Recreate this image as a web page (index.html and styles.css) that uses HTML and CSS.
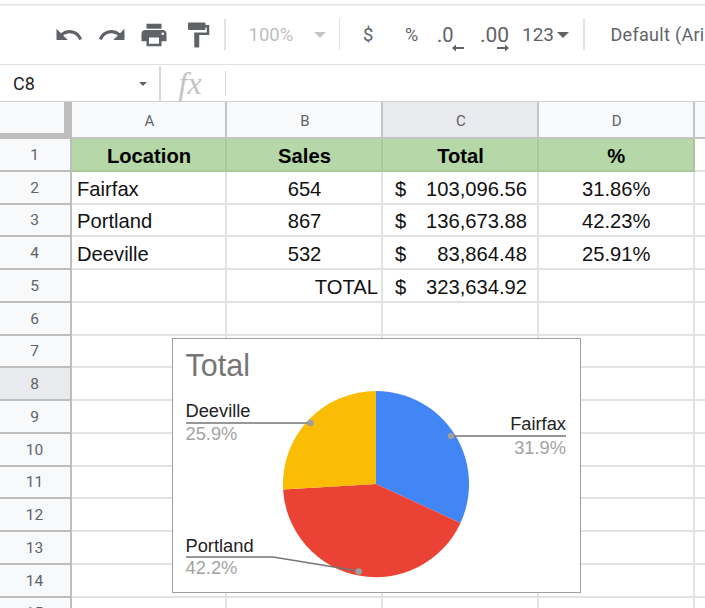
FILE: index.html
```html
<!DOCTYPE html>
<html lang="en">
<head>
<meta charset="utf-8">
<title>Sheet</title>
<link rel="stylesheet" href="styles.css">
</head>
<body>
<div class="app">
  <div class="toolbar">
    <svg class="ic ic-undo" viewBox="0 0 24 24"><path d="M12.5 8c-2.65 0-5.05.99-6.9 2.6L2 7v9h9l-3.62-3.62c1.39-1.16 3.16-1.88 5.12-1.88 3.54 0 6.55 2.31 7.6 5.5l2.37-.78C21.08 11.03 17.15 8 12.5 8z"/></svg>
    <svg class="ic ic-redo" viewBox="0 0 24 24"><path d="M18.4 10.6C16.55 8.99 14.15 8 11.5 8c-4.65 0-8.58 3.03-9.96 7.22L3.9 16c1.05-3.19 4.05-5.5 7.6-5.5 1.95 0 3.73.72 5.12 1.88L13 16h9V7l-3.6 3.6z"/></svg>
    <svg class="ic ic-print" viewBox="0 0 24 24"><path d="M19 8H5c-1.66 0-3 1.34-3 3v6h4v4h12v-4h4v-6c0-1.66-1.34-3-3-3zm-3 11H8v-5h8v5zm3-7c-.55 0-1-.45-1-1s.45-1 1-1 1 .45 1 1-.45 1-1 1zm-1-9H6v4h12V3z"/></svg>
    <svg class="ic ic-paint" viewBox="0 0 24 24"><path d="M18 4V3c0-.55-.45-1-1-1H5c-.55 0-1 .45-1 1v4c0 .55.45 1 1 1h12c.55 0 1-.45 1-1V6h1v4H9v11c0 .55.45 1 1 1h2c.55 0 1-.45 1-1v-9h8V4h-3z"/></svg>
    <span class="sep sep-a"></span>
    <span class="zoom-val">100%</span>
    <span class="caret caret-off"></span>
    <span class="sep sep-b"></span>
    <span class="tb tb-dollar">$</span>
    <span class="tb tb-pct">%</span>
    <span class="tb tb-dec1">.0<svg class="arrow" viewBox="0 0 12 8"><path d="M0 4l4-3.5V3h8v2H4v2.500z"/></svg></span>
    <span class="tb tb-dec2">.00<svg class="arrow" viewBox="0 0 12 8"><path d="M12 4L8 .5V3H0v2h8v2.500z"/></svg></span>
    <span class="tb tb-123">123</span>
    <span class="caret"></span>
    <span class="sep sep-c"></span>
    <span class="tb tb-font">Default (Ari</span>
  </div>
  <div class="formula">
    <span class="cellref">C8</span>
    <span class="caret caret-small"></span>
    <span class="vsep vsep-a"></span>
    <span class="fx">fx</span>
    <span class="vsep vsep-b"></span>
  </div>
  <div class="sheet">
    <div class="row head">
      <div class="corner"></div>
      <div class="ch">A</div><div class="ch">B</div><div class="ch ch-sel">C</div><div class="ch">D</div><div class="ch-rest"></div>
    </div>
    <div class="row">
      <div class="rh">1</div>
      <div class="c hd">Location</div><div class="c hd">Sales</div><div class="c hd">Total</div><div class="c hd">%</div><div class="c"></div>
    </div>
    <div class="row">
      <div class="rh">2</div>
      <div class="c left">Fairfax</div><div class="c">654</div><div class="c acct"><span>$</span><span>103,096.56</span></div><div class="c">31.86%</div><div class="c"></div>
    </div>
    <div class="row">
      <div class="rh">3</div>
      <div class="c left">Portland</div><div class="c">867</div><div class="c acct"><span>$</span><span>136,673.88</span></div><div class="c">42.23%</div><div class="c"></div>
    </div>
    <div class="row">
      <div class="rh">4</div>
      <div class="c left">Deeville</div><div class="c">532</div><div class="c acct"><span>$</span><span>83,864.48</span></div><div class="c">25.91%</div><div class="c"></div>
    </div>
    <div class="row">
      <div class="rh">5</div>
      <div class="c"></div><div class="c right">TOTAL</div><div class="c acct"><span>$</span><span>323,634.92</span></div><div class="c"></div><div class="c"></div>
    </div>
    <div class="row"><div class="rh">6</div><div class="c"></div><div class="c"></div><div class="c"></div><div class="c"></div><div class="c"></div></div>
    <div class="row"><div class="rh">7</div><div class="c"></div><div class="c"></div><div class="c"></div><div class="c"></div><div class="c"></div></div>
    <div class="row"><div class="rh rh-sel">8</div><div class="c"></div><div class="c"></div><div class="c"></div><div class="c"></div><div class="c"></div></div>
    <div class="row"><div class="rh">9</div><div class="c"></div><div class="c"></div><div class="c"></div><div class="c"></div><div class="c"></div></div>
    <div class="row"><div class="rh">10</div><div class="c"></div><div class="c"></div><div class="c"></div><div class="c"></div><div class="c"></div></div>
    <div class="row"><div class="rh">11</div><div class="c"></div><div class="c"></div><div class="c"></div><div class="c"></div><div class="c"></div></div>
    <div class="row"><div class="rh">12</div><div class="c"></div><div class="c"></div><div class="c"></div><div class="c"></div><div class="c"></div></div>
    <div class="row"><div class="rh">13</div><div class="c"></div><div class="c"></div><div class="c"></div><div class="c"></div><div class="c"></div></div>
    <div class="row"><div class="rh">14</div><div class="c"></div><div class="c"></div><div class="c"></div><div class="c"></div><div class="c"></div></div>
    <div class="row"><div class="rh">15</div><div class="c"></div><div class="c"></div><div class="c"></div><div class="c"></div><div class="c"></div></div>
  </div>
  <svg class="chart" viewBox="172 338 409 255" width="409" height="255">
    <rect class="frame" x="172.500" y="338.500" width="408" height="254"/>
    <text class="title" x="185.500" y="376">Total</text>
    <path class="blue" d="M376 484V391A93 93 0 0 1 460.500 522.900Z"/>
    <path class="red" d="M376 484L460.500 522.900A93 93 0 0 1 283.100 489.400Z"/>
    <path class="yellow" d="M376 484L283.100 489.400A93 93 0 0 1 376 391Z"/>
    <path class="lead" d="M186 423H310.500"/>
    <path class="lead" d="M566 436H451"/>
    <path class="lead" d="M186 557H273L358.700 571"/>
    <circle class="dot" cx="310.500" cy="423" r="3.300"/>
    <circle class="dot" cx="451" cy="436" r="3.300"/>
    <circle class="dot" cx="358.700" cy="571.500" r="3.300"/>
    <text class="lab" x="185.500" y="417">Deeville</text>
    <text class="val" x="185.500" y="440">25.9%</text>
    <text class="lab end" x="566" y="430">Fairfax</text>
    <text class="val end" x="566" y="454">31.9%</text>
    <text class="lab" x="185.500" y="552">Portland</text>
    <text class="val" x="185.500" y="574">42.2%</text>
  </svg>
</div>
</body>
</html>
```
FILE: styles.css
```css
html, body { margin: 0; padding: 0; background: #fff; }
.app { position: relative; width: 705px; height: 608px; overflow: hidden; font-family: "Liberation Sans", Arial, sans-serif; }

.toolbar { box-sizing: border-box; height: 65px; border-top: 2px solid #fff; background: linear-gradient(#e3e3e3, #e3e3e3) 0 2px / 100% 1.500px no-repeat; border-bottom: 1.500px solid #e0e0e0; display: flex; align-items: center; padding: 3px 0 0 54px; white-space: nowrap; font-family: Roboto, sans-serif; color: #5f6368; }
.ic { width: 30px; height: 30px; fill: #5f6368; flex: none; }
.ic-redo { margin-left: 13px; }
.ic-print { margin-left: 12px; }
.ic-paint { margin-left: 14px; }
.sep { width: 1.500px; height: 31px; background: #e3e3e3; flex: none; }
.sep-a { margin-left: 11px; }
.zoom-val { margin-left: 23px; width: 46px; font-size: 18.500px; color: #bdbdbd; }
.caret { width: 0; height: 0; border-left: 6.500px solid transparent; border-right: 6.500px solid transparent; border-top: 6.500px solid #5f6368; flex: none; }
.caret-off { margin-left: 19px; border-top-color: #c4c4c4; }
.sep-b { margin-left: 13px; }
.tb { font-size: 18px; line-height: 20px; flex: none; }
.tb-dollar { margin-left: 23px; width: 19px; font-size: 18.500px; }
.tb-pct { margin-left: 23px; width: 19px; }
.tb-dec1 { margin-left: 13px; width: 36px; position: relative; font-size: 20px; }
.tb-dec2 { margin-left: 7px; width: 42px; position: relative; font-size: 21px; }
.arrow { position: absolute; width: 12px; height: 8px; fill: #5f6368; top: 19px; right: 9px; }
.tb-dec2 .arrow { right: 13px; }
.tb-123 { width: 35px; font-size: 19px; }
.sep-c { margin-left: 14px; }
.tb-font { margin-left: 26px; font-size: 18px; letter-spacing: 0.300px; }

.formula { box-sizing: border-box; height: 37px; border-bottom: 1.500px solid #cfcfcf; display: flex; align-items: center; position: relative; }
.cellref { margin-left: 13px; width: 126px; font-size: 18px; color: #1f1f1f; font-family: Roboto, sans-serif; }
.caret-small { border-left-width: 4px; border-right-width: 4px; border-top-width: 4.500px; margin-top: 2px; }
.vsep { width: 1.500px; background: #d8d8d8; flex: none; }
.vsep-a { margin-left: 12px; height: 35px; }
.vsep-b { margin-left: 20px; height: 25px; }
.fx { margin-left: 18px; width: 26px; font-family: "Liberation Serif", serif; font-style: italic; font-size: 32px; line-height: 30px; color: #c2c2c2; }

.sheet { display: block; }
.row { display: grid; grid-template-columns: 72px 155px 156px 156px 155.500px 12px; height: 32.750px; }
.head { height: 37px; }
.row > * { box-sizing: border-box; }
.corner { background: #f8f9fa; border-right: 8px solid #bdbdbd; border-bottom: 6px solid #bdbdbd; }
.ch { background: #f8f9fa; border-right: 2px solid #c4c4c4; border-bottom: 2.500px solid #c4c4c4; display: flex; align-items: center; justify-content: center; font-family: Roboto, sans-serif; font-size: 15px; color: #5f6368; padding: 2px 0 0 2px; }
.ch-sel { background: #e8eaed; }
.ch-rest { background: #f8f9fa; border-bottom: 2.500px solid #c4c4c4; }
.rh { background: #f8f9fa; border-right: 2px solid #bdbdbd; border-bottom: 2px solid #bdbdbd; display: flex; align-items: center; justify-content: center; font-family: Roboto, sans-serif; font-size: 15.500px; color: #5f6368; padding: 1px 1px 0 0; }
.rh-sel { background: #e8eaed; }
.c { border-right: 2px solid #e2e2e2; border-bottom: 2px solid #e2e2e2; display: flex; align-items: center; justify-content: center; font-size: 20.200px; color: #111; white-space: nowrap; padding: 4px 0 0 1px; }
.left { justify-content: flex-start; padding-left: 5px; }
.right { justify-content: flex-end; padding-right: 3px; }
.acct { justify-content: space-between; padding: 4px 10px 0 12px; }
.hd { background: #b6d7a8; border-color: #a9c99b; font-weight: 700; color: #000; }

.chart { position: absolute; left: 172px; top: 338px; display: block; }
.frame { fill: #fff; stroke: #9e9e9e; stroke-width: 1px; }
.title { font-size: 30.500px; fill: #757575; }
.blue { fill: #4285f4; }
.red { fill: #ea4335; }
.yellow { fill: #fbbc04; }
.lead { fill: none; stroke: #757575; stroke-width: 1.500px; }
.dot { fill: #9e9e9e; }
.lab { font-size: 18.300px; fill: #222; }
.val { font-size: 18.300px; fill: #a3a3a3; }
.end { text-anchor: end; }
```
